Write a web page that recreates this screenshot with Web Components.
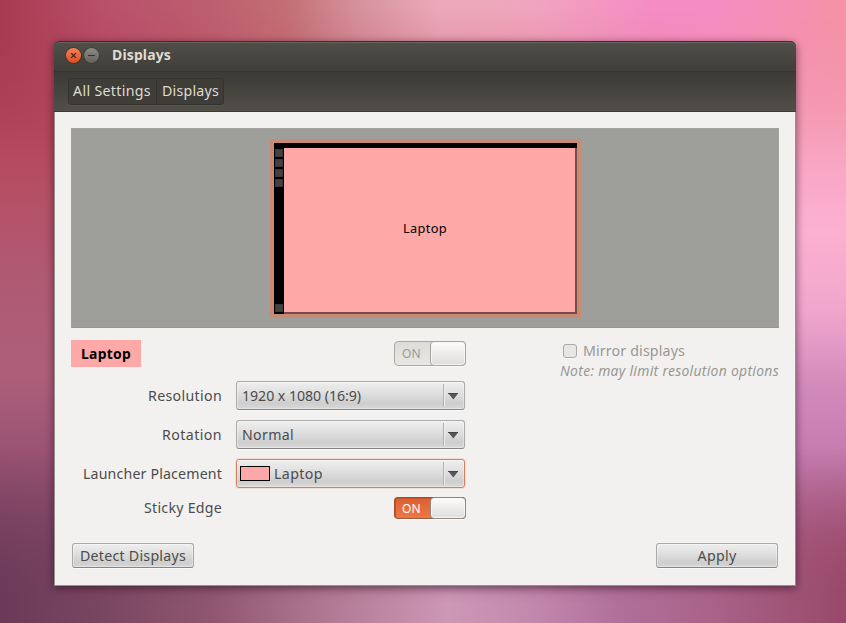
<!DOCTYPE html>
<html lang="en"><head><meta charset="utf-8"><title>Displays</title>
<style>html,body{margin:0;height:100%;overflow:hidden}body{font-family:"Noto Sans","Open Sans",sans-serif;font-size:14px;color:#4c4c4c}</style></head>
<body><displays-app></displays-app>
<script>
const define = (name, html, Base = HTMLElement) => {
  const t = document.createElement('template'); t.innerHTML = html;
  customElements.define(name, class extends Base {
    constructor() { super(); this.attachShadow({mode:'open'}).append(t.content.cloneNode(true)); }
  });
};

// Wallpaper: vertical side gradients with horizontal bands fading in at the top and bottom.
define('desk-wallpaper', `<style>
:host{display:grid;height:100vh}
.l{grid-area:1/1}
.a{background:linear-gradient(#a63b50 0%,#b34459 19%,#b54f64 30%,#b05a74 45%,#ad5f7a 60%,#965171 75%,#6b3b58 100%)}
.b{background:linear-gradient(#f492a5 0%,#f59bb5 16%,#fcb1d2 37%,#f0a5cc 50%,#d18bbb 62%,#c37aad 74%,#a95980 87%,#98496a 100%);mask-image:linear-gradient(90deg,transparent 8%,#000 93%)}
.t{background:linear-gradient(90deg,#a63b50 0%,#b9506a 12%,#bd5e70 25%,#c27074 34%,#d5919c 42%,#ebaab9 52%,#f0a5bf 63%,#f58cc4 77%,#f58cc4 84%,#f492a5 100%);mask-image:linear-gradient(#000 1%,rgba(0,0,0,.75) 7%,transparent 24%)}
.o{background:linear-gradient(90deg,#6a3a58 0%,#784661 12%,#905671 25%,#b27995 39%,#cc98b6 53%,#c388ad 63%,#b0709a 73%,#a96389 84%,#98496a 100%);mask-image:linear-gradient(transparent 72%,#000 97%)}
.w{z-index:1;display:flex;justify-content:center;align-items:flex-start;padding-top:41px;box-sizing:border-box;padding-left:4px}
</style><div class="l a"></div><div class="l b"></div><div class="l t"></div><div class="l o"></div><div class="l w"><slot></slot></div>`);

// Text run set to a given advance width by spacing its letters.
customElements.define('fit-text', class extends HTMLElement {
  constructor(){ super(); this.attachShadow({mode:'open'}).innerHTML =
    '<style>:host{display:inline-block;white-space:pre;flex:none}span{display:inline-block}</style><span><slot></slot></span>'; }
  connectedCallback(){
    const s = this.shadowRoot.querySelector('span'), w = +this.getAttribute('w');
    this.style.width = w + 'px';
    s.style.letterSpacing = (w - s.getBoundingClientRect().width) / this.textContent.length + 'px';
  }
});

define('title-bar', `<style>
:host{display:flex;align-items:center;height:30px;box-sizing:border-box;padding:0 0 2px 10px;background:linear-gradient(#504f49,#3f3e39);border-radius:6px 6px 0 0;box-shadow:inset 0 1px #33322e,inset 0 2px #65645e;color:#dfdbd2;font-weight:700;font-size:14px}
svg{display:block;width:38px;height:20px;margin-right:10px}
.t{display:flex;padding-bottom:2px}
</style><svg viewBox="0 0 38 20"><defs><linearGradient id="r" x2="0" y2="1"><stop stop-color="#f8835c"/><stop offset="1" stop-color="#de4b1c"/></linearGradient><linearGradient id="g" x2="0" y2="1"><stop stop-color="#8d8c84"/><stop offset="1" stop-color="#65645c"/></linearGradient></defs>
<circle cx="9.5" cy="10.6" r="8.4" fill="#33322e" opacity=".7"/><circle cx="9.5" cy="10.5" r="7.5" fill="url(#r)"/><path d="M7.1 8.1l4.8 4.8M11.9 8.1l-4.8 4.8" stroke="#452316" stroke-width="1.3"/>
<circle cx="27.5" cy="10.6" r="8.2" fill="#33322e" opacity=".7"/><circle cx="27.5" cy="10.5" r="7.4" fill="url(#g)"/><path d="M24 10.5h7" stroke="#35342f" stroke-width="1.1"/></svg><div class="t"><slot></slot></div>`);

define('crumb-bar', `<style>
:host{display:flex;height:41px;box-sizing:border-box;padding:6px 0 0 14px;background:linear-gradient(#3b3a36,#524f48);border-top:1px solid #363531;border-bottom:1px solid #3c3b37;color:#dfdbd2;font-size:14.2px}
.g{display:flex;height:27px;border:1px solid #34332f;border-radius:3px;box-sizing:border-box;background:#3f3d38;box-shadow:0 1px #57544d}
::slotted(*){height:25px;line-height:24px;padding:0 5px 0 4px}
::slotted(:last-child){border-left:1px solid #34332f;padding:0 4px 0 5px!important}
</style><div class="g"><slot></slot></div>`);

define('display-preview', `<style>
:host{display:flex;height:200px;box-sizing:border-box;background:#9e9e9b;border:1px solid #a3a3a0;border-bottom-color:#969693;justify-content:center;align-items:flex-start;padding:10px 0 0 1px}
.m{display:grid;grid-template:5px 1fr/10px 1fr;width:311px;height:179px;box-sizing:border-box;border:4px solid #c78a72;background:#000}
.top{grid-column:1/3}
.dock{display:flex;flex-direction:column;gap:2px;padding:1px 1px 2px}
i{width:8px;height:8px;background:#414141;box-shadow:inset 0 0 0 1px #393939}
i:last-child{margin-top:auto}
.s{display:flex;align-items:center;justify-content:center;background:#ffa8a8;border:solid #744b4b;border-width:0 2px 2px 0;padding:0 9px 5px 0;color:#000;font-size:12.8px}
</style><div class="m"><div class="top"></div><div class="dock"><i></i><i></i><i></i><i></i><i></i></div><div class="s"><slot></slot></div></div>`);

define('toggle-switch', `<style>
:host{display:flex;box-sizing:border-box;width:72px;height:25px;border:1px solid #aaa9a4;border-radius:4px;background:linear-gradient(#dddcd9,#e8e7e4);box-shadow:0 1px #fafafa;color:#9b9b98;font-size:12px}
:host([active]){height:22px;background:linear-gradient(#dc6031,#ee7745);border-color:#a44b29 #8f8680 #9b5c40 #a44b29;color:#fff;box-shadow:inset 1px 1px #c65327,0 1px #fafafa}
div{width:35px;display:flex;align-items:center;justify-content:center;box-sizing:border-box;padding-right:2px}
:host([active]) div{padding-top:1px}
b{flex:1;margin:-1px -1px -1px 0;border:1px solid #a5a49f;border-radius:4px;background:linear-gradient(#fcfcfb,#dedddb);box-shadow:inset 0 0 0 1px #f6f6f5}
:host([active]) b{border-color:#93867d}
</style><div><slot></slot></div><b></b>`);

define('combo-box', `<style>
:host{display:flex;align-items:center;box-sizing:border-box;width:229px;height:29px;border:1px solid #aaa;border-bottom-color:#858585;border-radius:3px;background:linear-gradient(#efefef,#dedede 45%,#cecece 80%,#d9d9d9);box-shadow:inset 0 0 0 1px rgba(255,255,255,.35),0 1px #fafafa;padding-left:5px;font-size:14.2px}
:host([focused]){border-color:#db7c5a;box-shadow:inset 0 0 0 1px rgba(255,255,255,.35),0 0 0 1px #f3ded6;padding-left:3px}
svg{margin-left:auto;display:block}
.c{display:flex;align-items:center;gap:4px}
</style><div class="c"><slot name="icon"></slot><slot></slot></div><svg width="21" height="27"><path d="M.5 2v23" stroke="#b0b0b0"/><path d="M1.5 2v23" stroke="#eee"/><path d="M5.5 11.5h9.5L10.3 17.5z" fill="#555"/><path d="M5 11.5h10" stroke="#444"/></svg>`);

define('colour-swatch', `<style>:host{display:block;width:30px;height:15px;box-sizing:border-box;border:1px solid #000;background:#ffa8a8}</style>`);

define('push-button', `<style>
:host{display:flex;align-items:center;justify-content:center;box-sizing:border-box;width:122px;height:25px;border:1px solid #aaa;border-bottom-color:#858585;border-radius:3px;background:linear-gradient(#efefef,#dedede 45%,#cecece 80%,#d6d6d6);box-shadow:inset 0 0 0 1px rgba(255,255,255,.35),0 1px #fafafa;font-size:14.2px}
</style><slot></slot>`);

define('form-row', `<style>
:host{display:grid;grid-template-columns:151px 229px;column-gap:14px;height:29px;align-items:center;font-size:14.2px}
.l,.f{display:flex;justify-content:flex-end}
</style><div class="l"><slot name="label"></slot></div><div class="f"><slot></slot></div>`);

define('monitor-name', `<style>:host{display:flex;align-items:center;justify-content:center;width:70px;height:27px;background:#ffa8a8;color:#000;font-weight:700;font-size:13.9px}</style><slot></slot>`);

define('mirror-option', `<style>
:host{display:block;width:219px;color:#999894;font-size:14.2px}
.r{display:flex;align-items:center;height:20px;padding-left:3px;margin-top:1px}
.r slot{display:block;margin-top:-2px}
i{width:14px;height:14px;box-sizing:border-box;border:1px solid #aaa9a5;border-radius:3px;background:#e7e6e4;margin-right:6px;box-shadow:0 1px #fafafa}
.n{font-style:italic;line-height:20px;font-size:13.9px}
</style><div class="r"><i></i><slot></slot></div><div class="n"><slot name="note"></slot></div>`);

define('settings-window', `<style>
:host{display:flex;flex-direction:column;width:742px;height:545px;border-radius:6px 6px 0 0;box-shadow:0 2px 8px rgba(40,10,25,.6)}
.body{flex:1;box-sizing:border-box;background:#f2f1f0;border:1px solid #96918f;border-top:0;padding:16px 16px 0;display:flex;flex-direction:column}
</style><slot name="head"></slot><div class="body"><slot></slot></div>`);

define('displays-app', `<style>
.head{display:block}
.main{display:flex;justify-content:space-between;margin-top:12px}
.left{width:395px}
.top{display:flex;justify-content:space-between;align-items:flex-start;height:27px}
.top toggle-switch{margin-top:1px}
.rows{display:grid;row-gap:10px;margin-top:14px}
.last{margin-top:-5px}
.foot{display:flex;justify-content:space-between;padding:0 1px;margin-top:21px}
</style><desk-wallpaper><settings-window>
<div slot="head" class="head"><title-bar><fit-text w="59">Displays</fit-text></title-bar>
<crumb-bar><fit-text w="78">All Settings</fit-text><fit-text w="57">Displays</fit-text></crumb-bar></div>
<display-preview><fit-text w="44">Laptop</fit-text></display-preview>
<div class="main"><div class="left">
<div class="top"><monitor-name><fit-text w="50">Laptop</fit-text></monitor-name><toggle-switch><fit-text w="19">ON</fit-text></toggle-switch></div>
<div class="rows">
<form-row><fit-text slot="label" w="74">Resolution</fit-text><combo-box><fit-text w="119">1920 x 1080 (16:9)</fit-text></combo-box></form-row>
<form-row><fit-text slot="label" w="60">Rotation</fit-text><combo-box><fit-text w="52">Normal</fit-text></combo-box></form-row>
<form-row><fit-text slot="label" w="139">Launcher Placement</fit-text><combo-box focused><colour-swatch slot="icon"></colour-swatch><fit-text w="49">Laptop</fit-text></combo-box></form-row>
<form-row class="last"><fit-text slot="label" w="78">Sticky Edge</fit-text><toggle-switch active style="margin-right:-1px"><fit-text w="19">ON</fit-text></toggle-switch></form-row>
</div></div>
<mirror-option><fit-text w="102">Mirror displays</fit-text><fit-text slot="note" w="219">Note: may limit resolution options</fit-text></mirror-option></div>
<div class="foot"><push-button><fit-text w="106">Detect Displays</fit-text></push-button><push-button><fit-text w="39">Apply</fit-text></push-button></div>
</settings-window></desk-wallpaper>`);
</script></body></html>
